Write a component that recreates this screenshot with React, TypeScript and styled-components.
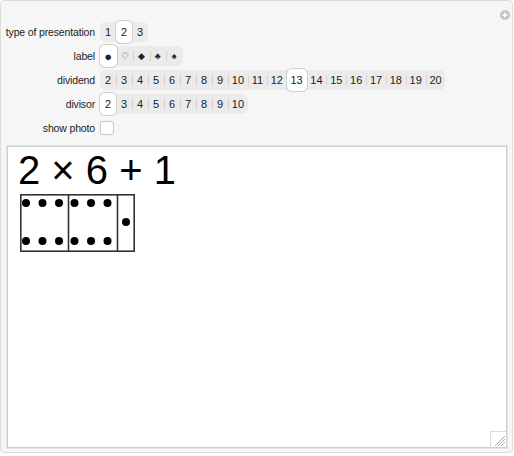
import React from 'react';
import styled, { createGlobalStyle } from 'styled-components';

const GlobalStyle = createGlobalStyle`
  html, body {
    margin: 0;
    padding: 0;
    background: #ffffff;
  }
  body {
    font-family: "Liberation Sans", Arial, sans-serif;
  }
`;

type Option = { value: string; text: React.ReactNode };

const labels: Option[] = [
  { value: 'dot', text: '●' },
  { value: 'heart', text: '♡' },
  { value: 'diamond', text: '◆' },
  { value: 'club', text: '♣' },
  { value: 'spade', text: '♠' },
];

const range = (a: number, b: number): Option[] =>
  Array.from({ length: b - a + 1 }, (_, i) => ({ value: String(a + i), text: String(a + i) }));

interface SetterBarProps {
  options: Option[];
  selected: string;
  symbols?: boolean;
}

const SetterBar: React.FC<SetterBarProps> = ({ options, selected, symbols }) => {
  const selIndex = options.findIndex((o) => o.value === selected);
  return (
    <Bar>
      {options.map((o, i) => (
        <Segment
          key={o.value}
          $active={o.value === selected}
          $divider={i > 0 && i !== selIndex && i - 1 !== selIndex}
          $symbol={symbols}
        >
          {o.text}
        </Segment>
      ))}
    </Bar>
  );
};

const Dominoes: React.FC = () => {
  const dotsTwoRows = (x0: number) =>
    [0, 1, 2].flatMap((k) => [
      <circle key={`t${x0}${k}`} cx={x0 + 6 + k * 16.5} cy={9} r={4} />,
      <circle key={`b${x0}${k}`} cx={x0 + 6 + k * 16.5} cy={47} r={4} />,
    ]);
  return (
    <svg width="120" height="60" viewBox="0 0 120 60">
      <g fill="#000">
        {dotsTwoRows(0)}
        {dotsTwoRows(48.5)}
        <circle cx={106} cy={28} r={4} />
      </g>
      <g fill="none" stroke="#333" strokeWidth="1.6">
        <rect x="0.8" y="0.8" width="113.4" height="56.4" />
        <line x1="48.5" y1="0.8" x2="48.5" y2="57.2" />
        <line x1="97.5" y1="0.8" x2="97.5" y2="57.2" />
      </g>
    </svg>
  );
};

const App: React.FC = () => (
  <>
    <GlobalStyle />
    <Panel>
      <PlusIcon viewBox="0 0 10 10">
        <circle cx="5" cy="5" r="5" fill="#c4c4c4" />
        <path d="M5 2.4v5.2M2.4 5h5.2" stroke="#fff" strokeWidth="1.6" />
      </PlusIcon>
      <Controls>
        <Label>type of presentation</Label>
        <SetterBar options={range(1, 3)} selected="2" />
        <Label>label</Label>
        <SetterBar options={labels} selected="dot" symbols />
        <Label>dividend</Label>
        <SetterBar options={range(2, 20)} selected="13" />
        <Label>divisor</Label>
        <SetterBar options={range(2, 10)} selected="2" />
        <Label>show photo</Label>
        <Check />
      </Controls>
      <Output>
        <Expression>2 × 6 + 1</Expression>
        <Picture>
          <Dominoes />
        </Picture>
        <Grip viewBox="0 0 15 15">
          <path d="M4 14L14 4M7 14L14 7M10 14L14 10" stroke="#aaa" strokeWidth="1" />
        </Grip>
      </Output>
    </Panel>
  </>
);

export default App;

const Panel = styled.div`
  position: relative;
  box-sizing: border-box;
  width: 513px;
  height: 453px;
  background: #f6f6f6;
  border: 1px solid #dcdcdc;
  border-radius: 4px;
  padding: 19px 5px 0 6px;
`;

const PlusIcon = styled.svg`
  position: absolute;
  top: 9px;
  right: 2px;
  width: 10px;
  height: 10px;
`;

const Controls = styled.div`
  display: grid;
  grid-template-columns: 88px auto;
  grid-auto-rows: 24px;
  column-gap: 5px;
  align-items: center;
  justify-items: start;
  margin-bottom: 6px;
`;

const Label = styled.div`
  justify-self: end;
  font-size: 10.5px;
  letter-spacing: -0.15px;
  color: #222;
  white-space: nowrap;
`;

const Bar = styled.div`
  display: flex;
  align-items: center;
  height: 20px;
  background: #ebebeb;
  border-radius: 5px;
`;

const Segment = styled.div<{ $active: boolean; $divider: boolean; $symbol?: boolean }>`
  position: relative;
  display: flex;
  align-items: center;
  justify-content: center;
  box-sizing: border-box;
  min-width: ${(p) => (p.$symbol ? '16.5px' : '16px')};
  height: ${(p) => (p.$active ? '22px' : '20px')};
  padding: 0 3.8px;
  font-size: ${(p) => (p.$symbol ? (p.$active ? '13px' : '9px') : '11px')};
  color: #222;
  background: ${(p) => (p.$active ? '#ffffff' : 'transparent')};
  border-radius: 5px;
  box-shadow: ${(p) => (p.$active ? '0 0 0 1px #cfcfcf, 0 1px 1px rgba(0,0,0,0.12)' : 'none')};
  &::before {
    content: '';
    display: ${(p) => (p.$divider ? 'block' : 'none')};
    position: absolute;
    left: 0;
    top: 5px;
    bottom: 5px;
    width: 1px;
    background: #d4d4d4;
  }
`;

const Check = styled.div`
  box-sizing: border-box;
  width: 14px;
  height: 14px;
  background: #ffffff;
  border: 1px solid #c8c8c8;
  border-radius: 3px;
`;

const Output = styled.div`
  position: relative;
  box-sizing: border-box;
  width: 500px;
  height: 302px;
  background: #ffffff;
  border: 1px solid #cfcfcf;
  box-shadow: 0 0 0 1px #e4e4e4;
  padding: 1px 0 0 10px;
`;

const Expression = styled.div`
  font-family: "Liberation Sans", Arial, sans-serif;
  font-size: 40px;
  line-height: 44px;
  color: #000;
`;

const Picture = styled.div`
  display: flex;
  margin-top: 2px;
  margin-left: 2px;
`;

const Grip = styled.svg`
  position: absolute;
  right: 0;
  bottom: 0;
  width: 15px;
  height: 15px;
  background: #fff;
  border-left: 1px solid #ddd;
  border-top: 1px solid #ddd;
`;
